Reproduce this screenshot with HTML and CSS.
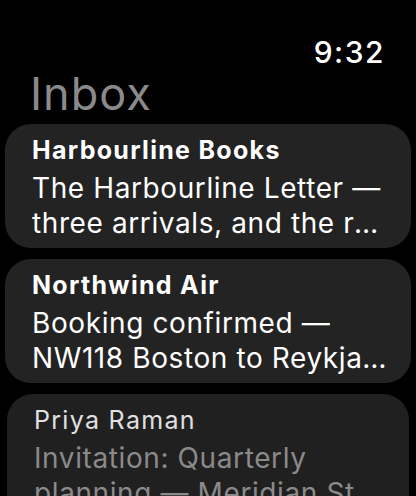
FILE: index.html
```html
<!DOCTYPE html>
<html>
<head>
<meta charset="utf-8">
<link rel="stylesheet" href="styles.css">
</head>
<body>
<div class="screen">
  <div class="status">
    <span class="time">9:32</span>
  </div>
  <h1 class="title">Inbox</h1>
  <div class="list">
    <div class="card">
      <div class="sender">Harbourline Books</div>
      <div class="subject">
        <span class="line">The Harbourline Letter —</span>
        <span class="line">three arrivals, and the reading room reopens</span>
      </div>
    </div>
    <div class="card">
      <div class="sender">Northwind Air</div>
      <div class="subject">
        <span class="line">Booking confirmed —</span>
        <span class="line">NW118 Boston to Reykjavík</span>
      </div>
    </div>
    <div class="card read">
      <div class="sender">Priya Raman</div>
      <div class="subject">
        <span class="line">Invitation: Quarterly</span>
        <span class="line">planning — Meridian St. office</span>
      </div>
    </div>
  </div>
</div>
</body>
</html>
```
FILE: styles.css
```css
html, body {
  margin: 0;
  padding: 0;
  background: #000;
}
.screen {
  width: 416px;
  height: 496px;
  overflow: hidden;
  font-family: Inter, "Noto Sans", sans-serif;
  color: #fff;
}
.status {
  display: flex;
  justify-content: flex-end;
  padding: 35px 31px 0 0;
  height: 34px;
}
.time {
  font-size: 30px;
  line-height: 34px;
  font-weight: 500;
  letter-spacing: 1.5px;
}
.title {
  margin: 0;
  padding-left: 30px;
  font-size: 45px;
  line-height: 50px;
  font-weight: 400;
  letter-spacing: 1px;
  color: #8a8a8a;
  height: 55px;
}
.list {
  display: flex;
  flex-direction: column;
  gap: 11px;
  padding: 0 5px;
}
.card {
  background: #232323;
  border-radius: 26px;
  height: 124px;
  box-sizing: border-box;
  padding: 11px 21px 0 27px;
}
.sender {
  font-size: 25px;
  line-height: 30px;
  font-weight: 700;
  letter-spacing: 1.3px;
  white-space: nowrap;
}
.subject {
  margin-top: 6px;
  font-size: 28px;
  line-height: 35px;
  letter-spacing: 0.6px;
}
.line {
  display: block;
  white-space: nowrap;
  overflow: hidden;
  text-overflow: ellipsis;
}
.card.read {
  margin: 0 2px;
  background: #202020;
  padding-left: 27px;
  height: 140px;
}
.card.read .sender {
  font-weight: 400;
  color: #e0e0e0;
}
.card.read .subject {
  color: #8a8a8a;
}
```
